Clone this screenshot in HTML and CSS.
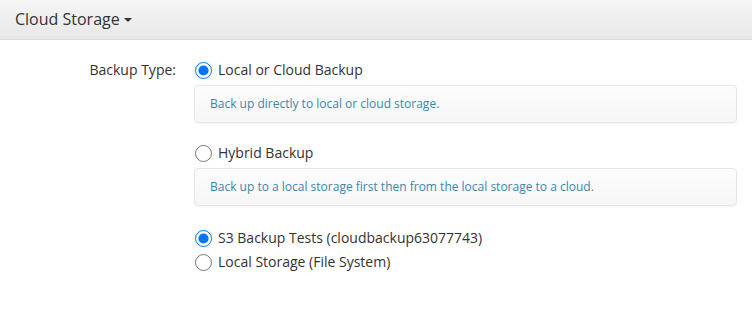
FILE: index.html
```html
<!DOCTYPE html>
<html lang="en">
<head>
    <meta charset="UTF-8">
    <meta name="viewport" content="width=device-width, initial-scale=1.0">
    <title>Cloud Storage</title>
    <link rel="stylesheet" href="styles.css">
</head>
<body>

<div class="panel">
    <!-- Panel heading with dropdown -->
    <div class="panel-heading">
        <span class="panel-title">Cloud Storage <span class="caret"></span></span>
    </div>

    <div class="panel-body">
        <div class="form-row">
            <label class="row-label">Backup Type:</label>
            <div class="row-controls">
                <label class="radio">
                    <input type="radio" name="backupType" checked>
                    <span>Local or Cloud Backup</span>
                </label>
                <div class="well">Back up directly to local or cloud storage.</div>

                <label class="radio">
                    <input type="radio" name="backupType">
                    <span>Hybrid Backup</span>
                </label>
                <div class="well">Back up to a local storage first then from the local storage to a cloud.</div>

                <div class="storage-list">
                    <label class="radio compact">
                        <input type="radio" name="storage" checked>
                        <span>S3 Backup Tests (cloudbackup63077743)</span>
                    </label>
                    <label class="radio compact">
                        <input type="radio" name="storage">
                        <span>Local Storage (File System)</span>
                    </label>
                </div>
            </div>
        </div>
    </div>
</div>

</body>
</html>
```

FILE: styles.css
```css
body {
    font-family: 'Open Sans', sans-serif;
    margin: 0;
    background-color: #ffffff;
    color: #333;
}
.panel {
    background-color: #fff;
    border-radius: 0 0 4px 4px;
    height: 311px;
}
.panel-heading {
    height: 39px;
    padding: 0 15px;
    display: flex;
    align-items: center;
    background: linear-gradient(to bottom, #f5f5f5, #e8e8e8);
    border-bottom: 1px solid #dcdcdc;
}
.panel-title {
    font-size: 16px;
    color: #333;
    padding-bottom: 2px;
}
.caret {
    display: inline-block;
    width: 0;
    height: 0;
    margin-left: 0;
    vertical-align: middle;
    border-top: 4px solid #333;
    border-left: 4px solid transparent;
    border-right: 4px solid transparent;
}
.panel-body {
    padding: 20px 15px 15px;
}
.form-row {
    display: flex;
}
.row-label {
    width: 161px;
    text-align: right;
    font-size: 14px;
    line-height: 20px;
    padding-right: 18px;
    flex-shrink: 0;
}
.row-controls {
    flex: 1;
}
.radio {
    display: flex;
    align-items: center;
    font-size: 14px;
    line-height: 20px;
    color: #333;
}
.radio input {
    width: 17px;
    height: 17px;
    margin: 0 6px 0 1px;
}
.well {
    margin: 5px 0 20px;
    min-height: 38px;
    box-sizing: border-box;
    padding: 8px 15px;
    font-size: 12px;
    line-height: 20px;
    color: #3a87ad;
    background: linear-gradient(to bottom, #fdfdfd, #f6f6f6);
    border: 1px solid #e6e6e6;
    border-radius: 4px;
    box-shadow: 0 1px 1px rgba(0, 0, 0, 0.04);
}
.storage-list {
    margin-top: 1px;
}
.radio.compact {
    line-height: 24px;
}
```
